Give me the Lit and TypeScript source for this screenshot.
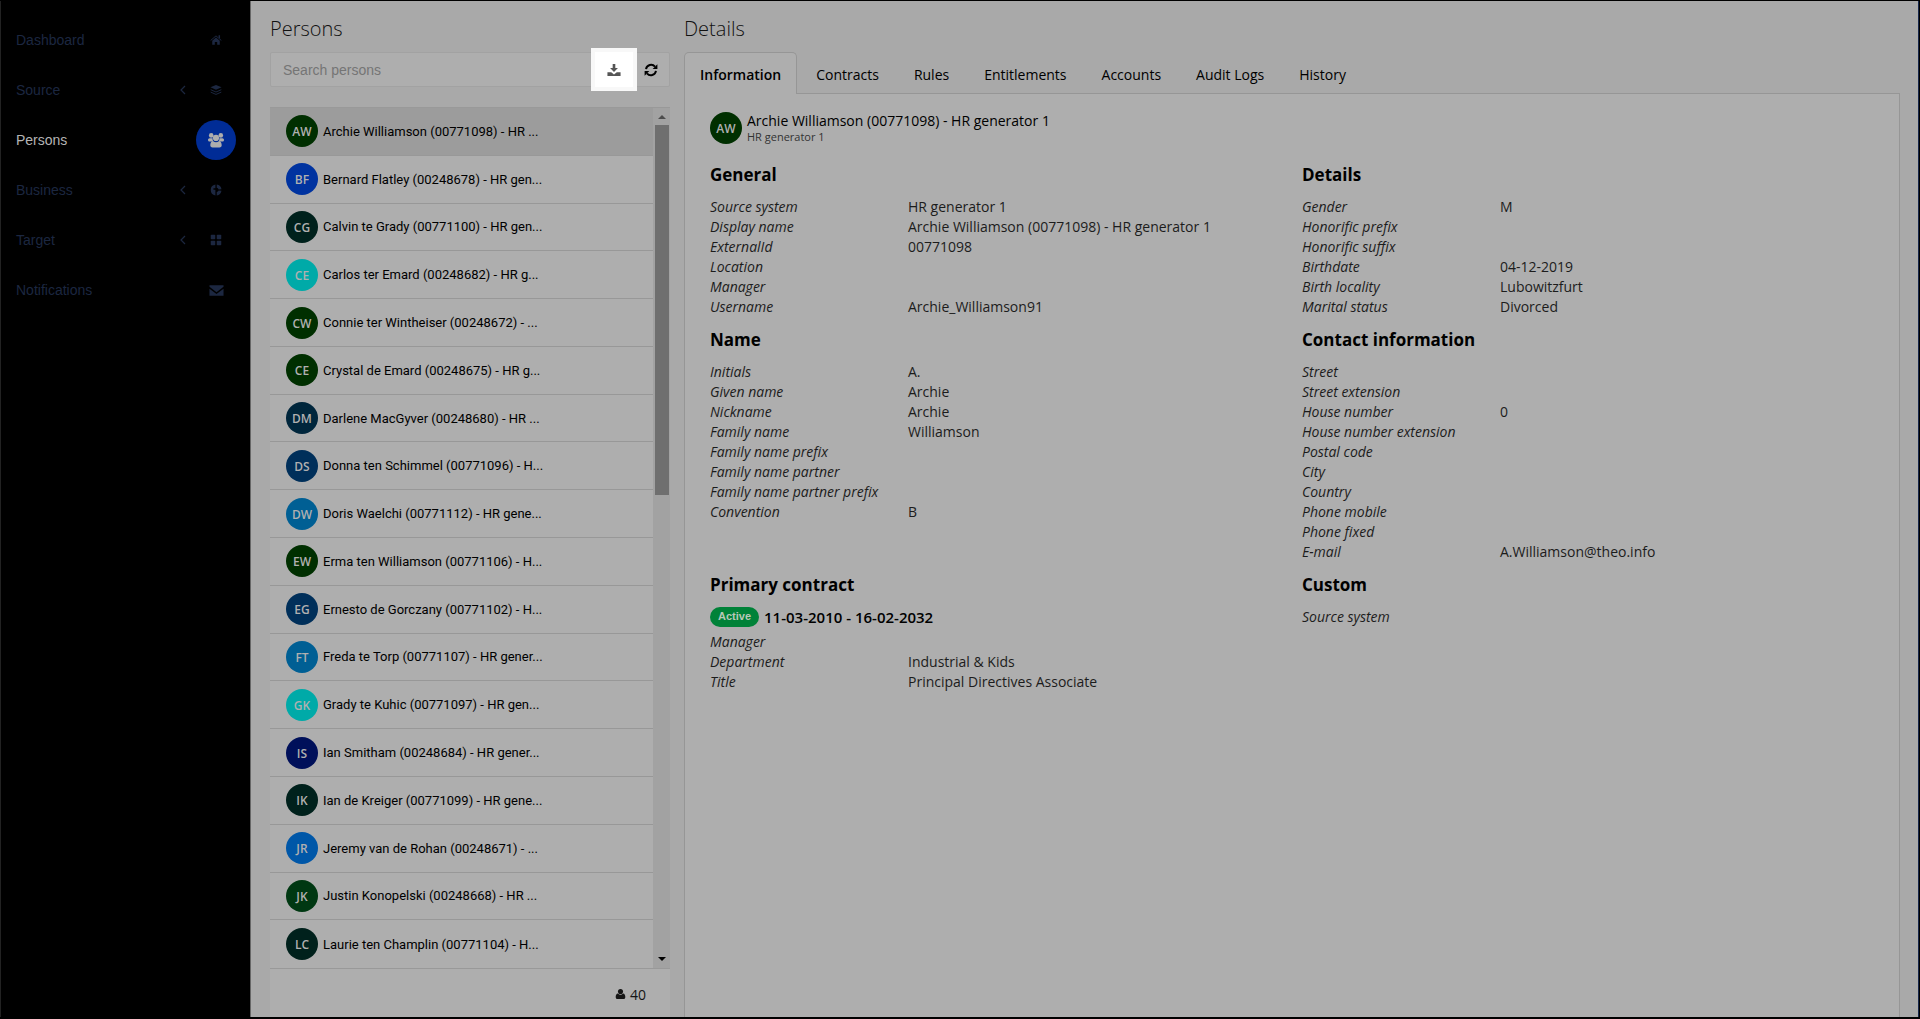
import { LitElement, html, css, svg } from "lit";
import { customElement } from "lit/decorators.js";

type Pair = [string, string];

const icons = {
  home: svg`<path d="M8 4.6 13 9v5.200H9.600v-3.400H6.400v3.400H3V9z"/><path d="M.9 8.600 8 2.500l7.100 6.100" fill="none" stroke="currentColor" stroke-width="1.300"/><path d="M11.400 1.800h2v4.600l-2-1.800z"/>`,
  layers: svg`<path d="M8 1.200 15.400 4.400 8 7.600.6 4.400z"/><path d="M.9 7.600 8 10.700l7.100-3.100M.9 10.800 8 13.900l7.100-3.100" fill="none" stroke="currentColor" stroke-width="1.300"/>`,
  globe: svg`<path d="M7.200.700v5.100H5.200L4 6.800l1.200 1h2v7.500A7.400 7.400 0 0 1 7.200.7z"/><path d="M9 .7a7.400 7.400 0 0 1 6.300 6.200l-3.800.3A3.400 3.400 0 0 0 9 5z"/><path d="M9 15.300v-4.500a3.400 3.400 0 0 0 2.500-2l3.800.3A7.400 7.400 0 0 1 9 15.300z"/>`,
  grid: svg`<rect x="1" y="1" width="6" height="6" rx="1"/><rect x="9" y="1" width="6" height="6" rx="1"/><rect x="1" y="9" width="6" height="6" rx="1"/><rect x="9" y="9" width="6" height="6" rx="1"/>`,
  mail: svg`<path d="M.5 2.500h15v1.600L8 9.800.5 4.100z"/><path d="M.5 6.200 8 11.800l7.500-5.600v7.300H.5z"/>`,
  users: svg`<circle cx="3.200" cy="3.400" r="2.300"/><circle cx="12.800" cy="3.400" r="2.300"/><path d="M1.600 6.200h3a4.600 4.600 0 0 0 .8 3.300H1.500C.5 9.500 0 8.800 0 8c0-1 .7-1.800 1.600-1.800zM14.400 6.200h-3a4.600 4.600 0 0 1-.8 3.300h3.900c1 0 1.500-.7 1.500-1.500 0-1-.7-1.800-1.600-1.800z"/><circle cx="8" cy="5.900" r="3.100"/><path d="M4.800 8.900a5 5 0 0 0 6.400 0c1.700.3 2.500 2.200 2.500 4.300 0 1.400-.9 2.200-2.200 2.200h-7c-1.300 0-2.200-.8-2.200-2.200 0-2.100.8-4 2.500-4.300z"/>`,
  download: svg`<path d="M6.500 1h3v4.800h3L8 10.400 3.500 5.800h3z"/><path d="M.5 10.500h4.300L8 13l3.200-2.500h4.300v4.300H.5z"/>`,
  refresh: svg`<path d="M2.300 7A5.900 5.900 0 0 1 12.600 4.200M13.700 9A5.900 5.900 0 0 1 3.400 11.800" fill="none" stroke="currentColor" stroke-width="2.200"/><path d="M15.300 1.500v5.400H9.900zM.7 14.500V9.100h5.400z"/>`,
  user: svg`<circle cx="8" cy="4.400" r="3.700"/><path d="M4.300 7.300a5.200 5.200 0 0 0 7.400 0c2.400.3 3.300 2.400 3.300 5 0 1.900-1 3-2.600 3H3.600c-1.600 0-2.600-1.100-2.600-3 0-2.600.9-4.700 3.300-5z"/>`,
};

const icon = (name: keyof typeof icons, cls = "icon") =>
  html`<svg class=${cls} viewBox="0 0 16 16" fill="currentColor" aria-hidden="true">${icons[name]}</svg>`;

const nav: { label: string; icon: keyof typeof icons; sub?: boolean; active?: boolean }[] = [
  { label: "Dashboard", icon: "home" },
  { label: "Source", icon: "layers", sub: true },
  { label: "Persons", icon: "users", active: true },
  { label: "Business", icon: "globe", sub: true },
  { label: "Target", icon: "grid", sub: true },
  { label: "Notifications", icon: "mail" },
];

const persons: [string, string, string][] = [
  ["AW", "#002f00", "Archie Williamson (00771098) - HR ..."],
  ["BF", "#0033a0", "Bernard Flatley (00248678) - HR gen..."],
  ["CG", "#00211c", "Calvin te Grady (00771100) - HR gen..."],
  ["CE", "#00aaa8", "Carlos ter Emard (00248682) - HR g..."],
  ["CW", "#002f00", "Connie ter Wintheiser (00248672) - ..."],
  ["CE", "#002f00", "Crystal de Emard (00248675) - HR g..."],
  ["DM", "#00263c", "Darlene MacGyver (00248680) - HR ..."],
  ["DS", "#002f5a", "Donna ten Schimmel (00771096) - H..."],
  ["DW", "#005f94", "Doris Waelchi (00771112) - HR gene..."],
  ["EW", "#002f00", "Erma ten Williamson (00771106) - H..."],
  ["EG", "#002f5a", "Ernesto de Gorczany (00771102) - H..."],
  ["FT", "#005f94", "Freda te Torp (00771107) - HR gener..."],
  ["GK", "#00aaa8", "Grady te Kuhic (00771097) - HR gen..."],
  ["IS", "#00105a", "Ian Smitham (00248684) - HR gener..."],
  ["IK", "#00211c", "Ian de Kreiger (00771099) - HR gene..."],
  ["JR", "#0057a8", "Jeremy van de Rohan (00248671) - ..."],
  ["JK", "#003812", "Justin Konopelski (00248668) - HR ..."],
  ["LC", "#00211c", "Laurie ten Champlin (00771104) - H..."],
];

const tabs = ["Information", "Contracts", "Rules", "Entitlements", "Accounts", "Audit Logs", "History"];

const general: Pair[] = [
  ["Source system", "HR generator 1"],
  ["Display name", "Archie Williamson (00771098) - HR generator 1"],
  ["ExternalId", "00771098"],
  ["Location", ""],
  ["Manager", ""],
  ["Username", "Archie_Williamson91"],
];
const details: Pair[] = [
  ["Gender", "M"],
  ["Honorific prefix", ""],
  ["Honorific suffix", ""],
  ["Birthdate", "04-12-2019"],
  ["Birth locality", "Lubowitzfurt"],
  ["Marital status", "Divorced"],
];
const names: Pair[] = [
  ["Initials", "A."],
  ["Given name", "Archie"],
  ["Nickname", "Archie"],
  ["Family name", "Williamson"],
  ["Family name prefix", ""],
  ["Family name partner", ""],
  ["Family name partner prefix", ""],
  ["Convention", "B"],
];
const contact: Pair[] = [
  ["Street", ""],
  ["Street extension", ""],
  ["House number", "0"],
  ["House number extension", ""],
  ["Postal code", ""],
  ["City", ""],
  ["Country", ""],
  ["Phone mobile", ""],
  ["Phone fixed", ""],
  ["E-mail", "A.Williamson@theo.info"],
];
const contract: Pair[] = [
  ["Manager", ""],
  ["Department", "Industrial & Kids"],
  ["Title", "Principal Directives Associate"],
];

@customElement("side-nav")
export class SideNav extends LitElement {
  static styles = css`
    :host { display: block; background: #000; border-left: 1px solid #222; font-family: "Liberation Sans", sans-serif; }
    .list { display: flex; flex-direction: column; padding: 14px 14px 0 15px; }
    .item { display: flex; align-items: center; height: 50px; font-size: 14px; color: #1c2740; text-decoration: none; }
    .item.active { color: #b4b4b4; }
    .label { flex: 1; }
    .chev { width: 6px; height: 10px; margin-right: 10px; }
    .badge { display: grid; place-items: center; width: 40px; height: 40px; border-radius: 50%; }
    .active .badge { background: #002c96; }
    .icon { width: 12px; height: 12px; }
    .icon.wide { width: 15px; height: 15px; }
    .active .icon { width: 16px; height: 16px; color: #adadad; }
  `;
  render() {
    return html`<nav class="list">
      ${nav.map(
        (n) => html`<a class="item ${n.active ? "active" : ""}" href="#">
          <span class="label">${n.label}</span>
          ${n.sub
            ? html`<svg class="chev" viewBox="0 0 6 10" fill="none" stroke="currentColor" stroke-width="1.200" aria-hidden="true"><path d="M5 1 1 5l4 4" /></svg>`
            : ""}
          <span class="badge">${icon(n.icon, n.icon === "mail" ? "icon wide" : "icon")}</span>
        </a>`
      )}
    </nav>`;
  }
}

@customElement("person-list")
export class PersonList extends LitElement {
  static styles = css`
    :host { display: flex; flex-direction: column; min-height: 0; font-family: Roboto, sans-serif; }
    .search { display: flex; height: 35px; box-sizing: border-box; border: 1px solid #a2a2a2; border-radius: 2px; background: #aeaeae; }
    .box { flex: 1; min-width: 0; border: 0; padding: 0 12px; background: none; font: 14px "Liberation Sans", sans-serif; color: #222; outline: none; }
    .box::placeholder { color: #757575; opacity: 1; }
    .tool { display: grid; place-items: center; border: 0; padding: 0; background: none; width: 36px; color: #000; }
    .tool.lit { width: 46px; margin: -5px -4px -5px 0; background: #fff; color: #555; border: 4px solid #f8f8f8; box-sizing: border-box; }
    .icon { width: 14px; height: 14px; }
    .scroll { display: flex; flex: 1; min-height: 0; margin-top: 20px; border-top: 1px solid #999; border-bottom: 1px solid #999; overflow: hidden; }
    .rows { display: flex; flex-direction: column; flex: 1; min-width: 0; margin: 0; padding: 0; list-style: none; }
    .cell { display: flex; flex: 1; min-height: 44px; }
    .row { display: flex; align-items: center; gap: 5px; width: 100%; padding: 0 16px; box-sizing: border-box; border: 0; border-bottom: 1px solid #989898; background: #aeaeae; color: #000; font: 13px Roboto, sans-serif; text-align: left; }
    .cell:last-child .row { border-bottom: 0; }
    .row.sel { background: #9c9c9c; }
    .ava { display: grid; place-items: center; flex: none; width: 32px; height: 32px; border-radius: 50%; color: #b0b0b0; font: 600 12px/34px "Open Sans", sans-serif; }
    .text { white-space: nowrap; }
    .bar { display: flex; flex-direction: column; align-items: center; width: 17px; background: #a2a2a2; }
    .up, .down { width: 0; height: 0; border: 4px solid transparent; }
    .up { border-top: 0; border-bottom-color: #4c4c4c; margin: 7px 0 6px; }
    .thumb { width: 14px; height: 43%; background: #6f6f6f; }
    .down { border-bottom: 0; border-top-color: #000; margin: auto 0 7px; }
    .foot { display: flex; align-items: center; justify-content: flex-end; gap: 4px; height: 48px; box-sizing: border-box; padding: 2px 24px 0 0; background: #aeaeae; color: #151515; font: 14px "Open Sans", sans-serif; }
    .foot .icon { width: 11px; height: 12px; }
  `;
  render() {
    return html`
      <div class="search">
        <input class="box" type="text" placeholder="Search persons" aria-label="Search persons" />
        <button class="tool lit" aria-label="Download">${icon("download")}</button>
        <button class="tool" aria-label="Refresh">${icon("refresh")}</button>
      </div>
      <div class="scroll">
        <ul class="rows">
          ${persons.map(
            ([ini, color, text], i) => html`<li class="cell"><button class="row ${i === 0 ? "sel" : ""}">
              <span class="ava" style="background:${color}">${ini}</span><span class="text">${text}</span>
            </button></li>`
          )}
        </ul>
        <div class="bar"><i class="up"></i><i class="thumb"></i><i class="down"></i></div>
      </div>
      <div class="foot">${icon("user")}<span>40</span></div>
    `;
  }
}

@customElement("person-details")
export class PersonDetails extends LitElement {
  static styles = css`
    :host { display: flex; flex-direction: column; min-height: 0; font-family: "Open Sans", sans-serif; font-size: 14px; color: #1c1c1c; }
    .tabs { display: flex; gap: 3px; margin-bottom: -1px; z-index: 1; }
    .tab { height: 42px; padding: 2px 15px 0; border: 1px solid transparent; border-bottom: 0; border-radius: 5px 5px 0 0; background: none; color: #000; font: 14px "Open Sans", sans-serif; }
    .tab.on { font-weight: 600; background: #aeaeae; border-color: #969696; }
    .panel { flex: 1; padding: 18px 5px 16px 25px; border: 1px solid #969696; border-bottom: 0; background: #aeaeae; }
    .who { display: flex; align-items: center; gap: 5px; margin-bottom: 10px; }
    .ava { display: grid; place-items: center; width: 32px; height: 32px; border-radius: 50%; background: #002f00; color: #b0b0b0; font: 600 12px/34px "Open Sans", sans-serif; }
    .name { line-height: 18px; color: #000; }
    .sub { font-size: 11px; line-height: 14px; color: #333; }
    .grid { display: grid; grid-template-columns: 1fr 1fr; }
    .title { margin: 0; padding: 9px 0 10px; font: 700 17px/24px "Open Sans", sans-serif; color: #000; }
    .grid .sec { padding-bottom: 2px; }
    .pairs { display: grid; grid-template-columns: 198px 1fr; margin: 0; grid-auto-rows: 20px; line-height: 20px; }
    .key { font-style: italic; }
    .val { margin: 0; }
    .period { display: flex; align-items: center; gap: 5px; height: 20px; margin-bottom: 5px; font: 600 15px/20px "Open Sans", sans-serif; color: #000; }
    .pill { border-radius: 10px; padding: 0 8px; height: 20px; background: #008238; color: #b8c8b8; font: 700 11px/19px "Liberation Sans", sans-serif; }
  `;
  private pairs(rows: Pair[]) {
    return html`<dl class="pairs">${rows.map(([k, v]) => html`<dt class="key">${k}</dt><dd class="val">${v}</dd>`)}</dl>`;
  }
  private section(title: string, rows: Pair[]) {
    return html`<section class="sec"><h2 class="title">${title}</h2>${this.pairs(rows)}</section>`;
  }
  render() {
    return html`
      <div class="tabs" role="tablist">
        ${tabs.map((t, i) => html`<button class="tab ${i === 0 ? "on" : ""}" role="tab" aria-selected=${i === 0}>${t}</button>`)}
      </div>
      <div class="panel">
        <div class="who">
          <span class="ava">AW</span>
          <div><div class="name">Archie Williamson (00771098) - HR generator 1</div><div class="sub">HR generator 1</div></div>
        </div>
        <div class="grid">
          ${this.section("General", general)} ${this.section("Details", details)}
          ${this.section("Name", names)} ${this.section("Contact information", contact)}
          <section class="sec">
            <h2 class="title">Primary contract</h2>
            <div class="period"><span class="pill">Active</span><span>11-03-2010 - 16-02-2032</span></div>
            ${this.pairs(contract)}
          </section>
          ${this.section("Custom", [["Source system", ""]])}
        </div>
      </div>
    `;
  }
}

@customElement("app-root")
export class AppRoot extends LitElement {
  static styles = css`
    :host { display: grid; grid-template-columns: 250px 1fr; height: 100vh; box-sizing: border-box; border: 1px solid #000; border-bottom-width: 2px; border-left: 0; background: #a9a9a9; }
    .main { display: grid; grid-template-columns: 400px 1fr; column-gap: 14px; padding: 0 18px 0 19px; min-height: 0; border-left: 1px solid #666; border-right: 1px solid #16264a; }
    .col { display: flex; flex-direction: column; min-width: 0; min-height: 0; }
    .head { margin: 0; padding: 14px 0 9px; font: 300 20px/28px "Open Sans", sans-serif; color: #111; }
    .fill { flex: 1; }
  `;
  render() {
    return html`
      <side-nav></side-nav>
      <main class="main">
        <div class="col"><h1 class="head">Persons</h1><person-list class="fill"></person-list></div>
        <div class="col"><h1 class="head">Details</h1><person-details class="fill"></person-details></div>
      </main>
    `;
  }
}
